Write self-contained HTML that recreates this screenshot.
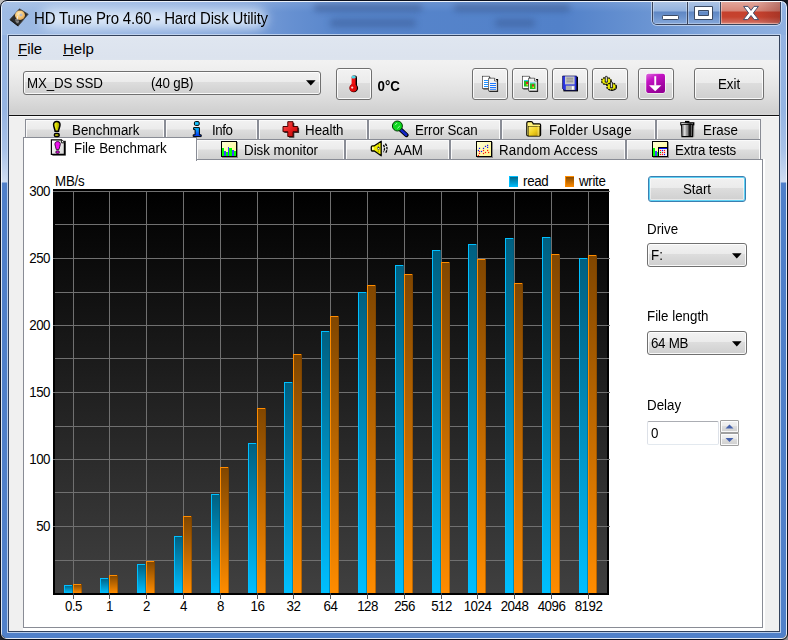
<!DOCTYPE html>
<html lang="en">
<head>
<meta charset="utf-8">
<title>HD Tune Pro 4.60 - Hard Disk Utility</title>
<style>
*{box-sizing:border-box;margin:0;padding:0}
html,body{width:788px;height:640px;overflow:hidden}
body{position:relative;font-family:"Liberation Sans",Arial,sans-serif;font-size:13.33px;color:#000;
 background:linear-gradient(180deg,#93b2e1 0px,#95b4e2 110px,#a9c2e8 150px,#d0ddf2 182px,#4f7fc9 183px,#5080c9 640px)}
.abs{position:absolute}
/* window frame */
#outline{left:0;top:0;width:788px;height:640px;border:1px solid #0a0f1c;border-radius:7px 7px 6px 6px;box-shadow:inset 0 0 0 1px rgba(255,255,255,.82)}
#corn{left:0;top:0;width:788px;height:640px}
#titlebar{left:2px;top:2px;width:784px;height:33px;border-radius:6px 6px 0 0;overflow:hidden;
 background:linear-gradient(90deg,#9ebbe4 0px,#98b6e2 80px,#8aabde 170px,#7a9fd8 240px,#6690d1 290px,#5785cb 340px,#5281c9 560px,#6b95d3 650px,#84a8dc 720px,#8fb0e0 784px)}
#titlebar .shade{left:0;top:0;width:784px;height:33px;background:linear-gradient(180deg,rgba(255,255,255,.12) 0,rgba(255,255,255,0) 10px,rgba(255,255,255,0) 33px)}
#glow{left:40px;top:7px;width:224px;height:19px;border-radius:10px;background:rgba(224,235,249,.96);filter:blur(6px)}
.blob{background:#3d5f9a;filter:blur(3px);opacity:.6;border-radius:3px}
#title{left:34px;top:10px;font-size:15px;line-height:18px;letter-spacing:-0.17px;white-space:nowrap;color:#000;transform:scaleY(1.09);transform-origin:0 14.5px}
#clientborder{left:8px;top:35px;width:772px;height:597px;border:1px solid #33425c;box-shadow:0 0 0 1px rgba(200,216,240,.85)}
#client{left:9px;top:36px;width:770px;height:595px;background:#f0f0f0;overflow:hidden}
/* caption buttons */
#capbtns{left:652px;top:2px;width:129px;height:23px;border:1px solid #39445c;border-top:none;border-radius:0 0 5px 5px;overflow:hidden;box-shadow:0 0 0 1px rgba(255,255,255,.5)}
#capbtns .b{top:0;height:22px}
#bmin{left:0;width:35px;background:linear-gradient(180deg,#adc4e5 0,#92b1dd 9px,#5f87c4 10px,#6c93cd 15px,#86a8da 22px);border-right:1px solid #39445c;box-shadow:inset 1px 0 0 rgba(255,255,255,.35),inset -1px -1px 0 rgba(255,255,255,.3)}
#bmax{left:35px;width:33px;background:linear-gradient(180deg,#adc4e5 0,#92b1dd 9px,#5f87c4 10px,#6c93cd 15px,#86a8da 22px);border-right:1px solid #39445c;box-shadow:inset 1px 0 0 rgba(255,255,255,.35),inset -1px -1px 0 rgba(255,255,255,.3)}
#bclose{left:68px;width:60px;background:linear-gradient(90deg,rgba(120,30,20,0) 0,rgba(120,30,20,0) 60%,rgba(110,30,25,.35) 100%),linear-gradient(180deg,#e2a69b 0,#d68577 9px,#c5402d 10px,#c6432f 15px,#d0685a 20px,#e09a8c 22px);box-shadow:inset 1px 0 0 rgba(255,255,255,.35),inset -1px -1px 0 rgba(255,220,210,.45)}
/* menu */
#menubar{left:9px;top:36px;width:770px;height:24px;background:linear-gradient(180deg,#e6ebf4 0,#dfe6f0 2px,#dce3ee 21px,#dde4ee 24px)}
#menubar span{position:absolute;top:4px;font-size:15px;line-height:18px}
#toolbar{left:9px;top:60px;width:770px;height:55px;background:linear-gradient(180deg,#f2f2f2 0,#ededed 14px,#e0e0e0 34px,#cfcfcf 53px,#d8d8d8 55px)}
#tbline{left:9px;top:115px;width:770px;height:1px;background:#101010}
#tbline2{left:9px;top:116px;width:770px;height:1px;background:#fafafa}
.btn{border:1px solid #707070;border-radius:3px;background:linear-gradient(180deg,#f2f2f2 0,#ebebeb 46%,#dddddd 47%,#cfcfcf 100%);box-shadow:inset 0 0 0 1px rgba(255,255,255,.85)}
.combo{border:1px solid #707070;border-radius:3px;background:linear-gradient(180deg,#f2f2f2 0,#ebebeb 46%,#dddddd 47%,#cfcfcf 100%);box-shadow:inset 0 0 0 1px rgba(255,255,255,.85)}
.combo .t{position:absolute;left:4px;top:4px;line-height:16px;white-space:pre}
.arrow{width:0;height:0;border-left:4.5px solid transparent;border-right:4.5px solid transparent;border-top:5px solid #000}
.lbl{white-space:nowrap;line-height:16px}
.lbl,.tt,.t{transform:scaleY(1.1);transform-origin:0 12.4px}
/* tabs */
.tab{height:20px;border:1px solid #898c95;border-bottom:none;background:linear-gradient(180deg,#f2f2f2 0,#ebebeb 9px,#dddddd 10px,#cfcfcf 20px);box-shadow:inset 1px 1px 0 #fafafa,inset -1px 0 0 #fafafa}
.tab .tt{position:absolute;top:3px;line-height:16px;white-space:nowrap}
#panelbg{left:23px;top:159px;width:742px;height:472px;background:#fff}
#panel{left:23px;top:159px;width:740px;height:469px;background:#fff;border:1px solid #898c95}
#seltab{left:23px;top:137px;width:174px;height:24px;background:#fff;border:1px solid #898c95;border-bottom:none}
.chart{position:absolute;left:0;top:0}
</style>
</head>
<body>
<div id="titlebar" class="abs">
  <div class="abs blob" style="left:312px;top:2px;width:108px;height:7px;opacity:.8"></div>
  <div class="abs blob" style="left:328px;top:17px;width:86px;height:8px"></div>
  <div class="abs blob" style="left:452px;top:2px;width:116px;height:7px;opacity:.8"></div>
  <div class="abs blob" style="left:493px;top:17px;width:40px;height:8px"></div>
  <div class="abs shade"></div>
  <div id="glow" class="abs"></div>
</div>
<div class="abs" style="left:0;top:0;width:8px;height:8px;background:radial-gradient(circle at 100% 100%,rgba(0,0,0,0) 7.2px,#bdbdbd 7.8px)"></div>
<div class="abs" style="left:780px;top:0;width:8px;height:8px;background:radial-gradient(circle at 0 100%,rgba(0,0,0,0) 7.2px,#15171c 7.8px)"></div>
<div class="abs" style="left:0;top:632px;width:8px;height:8px;background:radial-gradient(circle at 100% 0,rgba(0,0,0,0) 6.2px,#1d2026 6.8px)"></div>
<div class="abs" style="left:780px;top:632px;width:8px;height:8px;background:radial-gradient(circle at 0 0,rgba(0,0,0,0) 6.2px,#8c8c8c 6.8px)"></div>
<div id="outline" class="abs"></div>
<div id="title" class="abs">HD Tune Pro 4.60 - Hard Disk Utility</div>
<svg class="abs" style="left:8px;top:7px" width="22" height="22" viewBox="0 0 22 22" >
<defs><radialGradient id="pl" cx="0.4" cy="0.35" r="0.7"><stop offset="0" stop-color="#ffebb8"/><stop offset="0.6" stop-color="#f5c26e"/><stop offset="1" stop-color="#dc9c4c"/></radialGradient></defs>
<polygon points="11.5,1.8 20.2,7.2 10.2,19 1.8,12.6" fill="#2b2b2b" stroke="#4a4a4a" stroke-width="0.8" stroke-linejoin="round"/>
<polygon points="2.2,13.3 10.2,19.4 10.2,18.2 2.6,12.4" fill="#111"/>
<ellipse cx="12" cy="8.3" rx="5" ry="4.7" fill="url(#pl)"/>
<rect x="11.6" y="6.7" width="2.8" height="2.5" fill="#b9b9c4"/>
<path d="M9.6 9.2 L9.2 12.6" stroke="#f4f4f4" stroke-width="0.9"/>
<path d="M7 12.9 L10.6 12.9 M7.6 14.3 L11 14.3 M8.4 15.7 L10.6 15.7" stroke="#b8b8b8" stroke-width="0.8"/>
</svg>
<div id="capbtns" class="abs">
  <div id="bmin" class="abs b"></div>
  <div id="bmax" class="abs b"></div>
  <div id="bclose" class="abs b"></div>
  <svg class="abs" style="left:0px;top:0px" width="128" height="22" viewBox="0 0 128 22" >
<rect x="9.500" y="13.500" width="16" height="4" rx="0.800" fill="#fff" stroke="#3c4a63" stroke-width="1"/>
<path d="M41.500 4.500 h18 v13 h-18 z M45.500 8.500 v5 h10 v-5 z" fill="#fff" fill-rule="evenodd" stroke="#3c4a63" stroke-width="1" stroke-linejoin="round"/>
<path d="M90.600 4.400 L95 4.400 L98 8.400 L101 4.400 L105.400 4.400 L100.400 11 L105.600 17.600 L101.200 17.600 L98 13.500 L94.800 17.600 L90.400 17.600 L95.600 11 Z" fill="#fff" stroke="#46506e" stroke-width="1" stroke-linejoin="round"/>
</svg>
</div>
<div id="clientborder" class="abs"></div>
<div id="client" class="abs"><div class="abs" id="pc" style="left:-9px;top:-36px;width:788px;height:640px">
  <div id="menubar" class="abs"><span style="left:9px"><u>F</u>ile</span><span style="left:54px"><u>H</u>elp</span></div>
  <div id="toolbar" class="abs"></div>
  <div id="tbline" class="abs"></div><div id="tbline2" class="abs"></div>

  <div class="abs combo" style="left:23px;top:71px;width:298px;height:24px"><span class="t" style="left:3px;letter-spacing:-0.15px">MX_DS SSD</span><span class="t" style="left:127px;letter-spacing:-0.2px">(40 gB)</span><svg class="abs" style="left:281.8px;top:8.4px" width="10" height="6" viewBox="0 0 10 6" ><polygon points="0,0.300 9.600,0.300 4.800,5.600" fill="#000"/></svg></div>
  <div class="abs btn" style="left:336px;top:68px;width:36px;height:32px"><svg class="abs" style="left:11px;top:5px" width="12" height="20" viewBox="0 0 12 20" >
<rect x="4.2" y="1.6" width="4.8" height="12" rx="2" fill="#000"/>
<circle cx="5.8" cy="14" r="4.3" fill="#000"/>
<rect x="3.6" y="1.6" width="4" height="12" rx="1.6" fill="#f01010"/>
<rect x="3.6" y="1.6" width="4" height="3" rx="1.4" fill="#48d8e8"/>
<circle cx="5.2" cy="14" r="3.7" fill="#e00808"/>
<circle cx="4.2" cy="13.6" r="1.1" fill="#ffd0d0"/>
</svg></div>
  <div class="abs lbl" style="left:377.5px;top:79px;font-weight:bold">0&#176;C</div>
  <div class="abs btn" style="left:472px;top:68px;width:36px;height:32px"><svg class="abs" style="left:9px;top:6px" width="17" height="18" viewBox="0 0 17 18" >
<rect x="1.3" y="2" width="7" height="12.4" fill="#000"/>
<rect x="0.5" y="1.2" width="7" height="12.4" fill="#fff" stroke="#222" stroke-width="0.6"/>
<path d="M2 5.5h4M2 7.5h4M2 9.5h4M2 11.5h4" stroke="#1e90ff" stroke-width="1"/>
<rect x="7.3" y="4" width="8.8" height="12.8" fill="#000"/>
<path d="M6.5 3.2 h6 l2.8 2.8 v10 h-8.8 z" fill="#f4f4f4" stroke="#222" stroke-width="0.6"/>
<path d="M12.5 3.2 v2.8 h2.8" fill="#fff" stroke="#222" stroke-width="0.6"/>
<path d="M8 8.5h6M8 10.5h6M8 12.5h6M8 14.3h6" stroke="#1e78ff" stroke-width="1"/>
</svg></div>
  <div class="abs btn" style="left:512px;top:68px;width:36px;height:32px"><svg class="abs" style="left:9px;top:6px" width="17" height="18" viewBox="0 0 17 18" >
<rect x="1.3" y="2" width="7" height="12.4" fill="#000"/>
<rect x="0.5" y="1.2" width="7" height="12.4" fill="#fff" stroke="#222" stroke-width="0.6"/>
<rect x="2" y="5" width="5.5" height="1" fill="#30c8f0"/>
<rect x="2" y="6" width="5.5" height="5.5" fill="#20c020"/>
<rect x="4" y="7" width="2" height="2" fill="#e02020"/><rect x="4.5" y="9" width="1.5" height="1.5" fill="#f0e020"/>
<rect x="7.3" y="4" width="8.8" height="12.8" fill="#000"/>
<path d="M6.500 3.2 h6 l2.800 2.8 v10 h-8.800 z" fill="#eee" stroke="#222" stroke-width="0.6"/>
<path d="M12.500 3.2 v2.800 h2.800" fill="#fff" stroke="#222" stroke-width="0.6"/>
<rect x="8" y="7.500" width="5.500" height="1" fill="#30c8f0"/>
<rect x="8" y="8.500" width="5.500" height="5.500" fill="#20c020"/>
<rect x="10" y="9.500" width="2" height="2" fill="#e02020"/><rect x="10.500" y="11.500" width="1.500" height="1.500" fill="#f0e020"/>
</svg></div>
  <div class="abs btn" style="left:552px;top:68px;width:36px;height:32px"><svg class="abs" style="left:9px;top:6px" width="17" height="17" viewBox="0 0 17 17" >
<rect x="1.400" y="1.800" width="14.600" height="14.600" fill="#000"/>
<path d="M0.600 1 h14 v14.200 h-12.400 l-1.600 -1.600 z" fill="#2a34e4" stroke="#10104a" stroke-width="0.7"/>
<rect x="3" y="1.400" width="9.600" height="8" fill="#c9c9c9"/>
<path d="M4.400 3.200h6.800M4.400 5h6.800M4.400 6.800h6.800" stroke="#858585" stroke-width="0.9"/>
<rect x="3.800" y="10.600" width="9" height="4.400" fill="#b0b0b0"/>
<rect x="9.800" y="11.200" width="2" height="3.400" fill="#fff"/>
</svg></div>
  <div class="abs btn" style="left:592px;top:68px;width:36px;height:32px"><svg class="abs" style="left:7px;top:5px" width="20" height="20" viewBox="0 0 20 20" ><g transform="translate(6.3,6.9)"><ellipse cx="0.500" cy="0.600" rx="5" ry="3.700" fill="#111"/>
<ellipse rx="4.700" ry="3.400" fill="#dcdc00" stroke="#111" stroke-width="1.500" stroke-dasharray="1.500 1.100"/>
<ellipse rx="3.700" ry="2.500" fill="#f2f200"/>
<ellipse cy="0.900" rx="1.700" ry="0.900" fill="#555"/>
<polygon points="-1.100,1 -1.100,-3.800 0,-5 1.100,-3.800 1.100,1" fill="#a8a8a8" stroke="#111" stroke-width="0.800"/>
<rect x="-0.300" y="-3.600" width="0.600" height="4.200" fill="#f4f4f4"/></g><g transform="translate(11.5,12.6)"><ellipse cx="0.500" cy="0.600" rx="5" ry="3.700" fill="#111"/>
<ellipse rx="4.700" ry="3.400" fill="#dcdc00" stroke="#111" stroke-width="1.500" stroke-dasharray="1.500 1.100"/>
<ellipse rx="3.700" ry="2.500" fill="#f2f200"/>
<ellipse cy="0.900" rx="1.700" ry="0.900" fill="#555"/>
<polygon points="-1.100,1 -1.100,-3.800 0,-5 1.100,-3.800 1.100,1" fill="#a8a8a8" stroke="#111" stroke-width="0.800"/>
<rect x="-0.300" y="-3.600" width="0.600" height="4.200" fill="#f4f4f4"/></g></svg></div>
  <div class="abs btn" style="left:638px;top:68px;width:36px;height:32px"><svg class="abs" style="left:6px;top:3px" width="22" height="23" viewBox="0 0 22 23" >
<defs><linearGradient id="pg" x1="0" y1="0" x2="0.500" y2="1"><stop offset="0" stop-color="#dc6adc"/><stop offset="0.350" stop-color="#c414c4"/><stop offset="1" stop-color="#960096"/></linearGradient></defs>
<rect x="0.600" y="1.200" width="20" height="20.400" rx="2.400" fill="#fff"/>
<rect x="1.200" y="1.800" width="18.800" height="19.200" rx="2" fill="url(#pg)"/>
<rect x="9.300" y="4.200" width="1.900" height="9.400" fill="#fff"/>
<polygon points="4,13.200 16.400,13.200 10.200,19.200" fill="#fff"/>
</svg></div>
  <div class="abs btn" style="left:694px;top:68px;width:70px;height:32px"><div class="abs lbl" style="left:0;width:68px;top:8.3px;text-align:center">Exit</div></div>

  <!-- tabs row 1 -->
  <div class="abs tab" style="left:25px;top:119px;width:140px"><span class="tt" style="left:46px">Benchmark</span></div>
  <div class="abs tab" style="left:165px;top:119px;width:93px"><span class="tt" style="left:46px;letter-spacing:-0.45px">Info</span></div>
  <div class="abs tab" style="left:258px;top:119px;width:110px"><span class="tt" style="left:46px">Health</span></div>
  <div class="abs tab" style="left:368px;top:119px;width:133px"><span class="tt" style="left:46px;letter-spacing:-0.12px">Error Scan</span></div>
  <div class="abs tab" style="left:501px;top:119px;width:155px"><span class="tt" style="left:47px;letter-spacing:0.23px">Folder Usage</span></div>
  <div class="abs tab" style="left:656px;top:119px;width:105px"><span class="tt" style="left:46px">Erase</span></div>
  <!-- tabs row 2 -->
  <div class="abs tab" style="left:196px;top:139px;width:149px"><span class="tt" style="left:47px">Disk monitor</span></div>
  <div class="abs tab" style="left:345px;top:139px;width:105px"><span class="tt" style="left:48px">AAM</span></div>
  <div class="abs tab" style="left:450px;top:139px;width:176px"><span class="tt" style="left:48px;letter-spacing:0.2px">Random Access</span></div>
  <div class="abs tab" style="left:626px;top:139px;width:135px"><span class="tt" style="left:48px;letter-spacing:-0.19px">Extra tests</span></div>
  <div id="panelbg" class="abs"></div>
  <div id="panel" class="abs"></div>
  <div id="seltab" class="abs"><span class="abs lbl" style="left:50px;top:3px">File Benchmark</span></div>
</div></div>
<svg class="chart" width="788" height="640" viewBox="0 0 788 640">
<defs>
<linearGradient id="bg" x1="0" y1="0" x2="0" y2="1"><stop offset="0" stop-color="#000"/><stop offset="1" stop-color="#404040"/></linearGradient>
<linearGradient id="rd" x1="0" y1="0" x2="0" y2="1"><stop offset="0" stop-color="#005f80"/><stop offset="1" stop-color="#00bfff"/></linearGradient>
<linearGradient id="wr" x1="0" y1="0" x2="0" y2="1"><stop offset="0" stop-color="#804600"/><stop offset="1" stop-color="#ff8c00"/></linearGradient>
</defs>
<rect x="53" y="189" width="556" height="406" fill="#000"/>
<rect x="55" y="191" width="552" height="402" fill="url(#bg)"/>
<rect x="55" y="560" width="554" height="1" fill="#707070"/>
<rect x="53" y="526" width="557" height="1" fill="#707070"/>
<rect x="55" y="492" width="554" height="1" fill="#707070"/>
<rect x="53" y="459" width="557" height="1" fill="#707070"/>
<rect x="55" y="426" width="554" height="1" fill="#707070"/>
<rect x="53" y="392" width="557" height="1" fill="#707070"/>
<rect x="55" y="358" width="554" height="1" fill="#707070"/>
<rect x="53" y="325" width="557" height="1" fill="#707070"/>
<rect x="55" y="292" width="554" height="1" fill="#707070"/>
<rect x="53" y="258" width="557" height="1" fill="#707070"/>
<rect x="55" y="224" width="554" height="1" fill="#707070"/>
<rect x="53" y="191" width="557" height="1" fill="#707070"/>
<rect x="73" y="191" width="1" height="402" fill="#707070"/>
<rect x="109" y="191" width="1" height="402" fill="#707070"/>
<rect x="146" y="191" width="1" height="402" fill="#707070"/>
<rect x="183" y="191" width="1" height="402" fill="#707070"/>
<rect x="220" y="191" width="1" height="402" fill="#707070"/>
<rect x="257" y="191" width="1" height="402" fill="#707070"/>
<rect x="293" y="191" width="1" height="402" fill="#707070"/>
<rect x="330" y="191" width="1" height="402" fill="#707070"/>
<rect x="367" y="191" width="1" height="402" fill="#707070"/>
<rect x="404" y="191" width="1" height="402" fill="#707070"/>
<rect x="441" y="191" width="1" height="402" fill="#707070"/>
<rect x="477" y="191" width="1" height="402" fill="#707070"/>
<rect x="514" y="191" width="1" height="402" fill="#707070"/>
<rect x="551" y="191" width="1" height="402" fill="#707070"/>
<rect x="588" y="191" width="1" height="402" fill="#707070"/>
<rect x="64" y="585" width="9" height="8" fill="url(#rd)"/>
<rect x="64" y="585" width="1" height="8" fill="#00bfff"/>
<rect x="64" y="585" width="8" height="1" fill="#00bfff"/>
<rect x="72" y="585" width="1" height="8" fill="#00506c" opacity="0.45"/>
<rect x="73" y="584" width="9" height="9" fill="url(#wr)"/>
<rect x="73" y="584" width="1" height="9" fill="#ff8c00"/>
<rect x="73" y="584" width="8" height="1" fill="#ff8c00"/>
<rect x="81" y="584" width="1" height="9" fill="#6e3c00" opacity="0.45"/>
<rect x="100" y="578" width="9" height="15" fill="url(#rd)"/>
<rect x="100" y="578" width="1" height="15" fill="#00bfff"/>
<rect x="100" y="578" width="8" height="1" fill="#00bfff"/>
<rect x="108" y="578" width="1" height="15" fill="#00506c" opacity="0.45"/>
<rect x="109" y="575" width="9" height="18" fill="url(#wr)"/>
<rect x="109" y="575" width="1" height="18" fill="#ff8c00"/>
<rect x="109" y="575" width="8" height="1" fill="#ff8c00"/>
<rect x="117" y="575" width="1" height="18" fill="#6e3c00" opacity="0.45"/>
<rect x="137" y="564" width="9" height="29" fill="url(#rd)"/>
<rect x="137" y="564" width="1" height="29" fill="#00bfff"/>
<rect x="137" y="564" width="8" height="1" fill="#00bfff"/>
<rect x="145" y="564" width="1" height="29" fill="#00506c" opacity="0.45"/>
<rect x="146" y="561" width="9" height="32" fill="url(#wr)"/>
<rect x="146" y="561" width="1" height="32" fill="#ff8c00"/>
<rect x="146" y="561" width="8" height="1" fill="#ff8c00"/>
<rect x="154" y="561" width="1" height="32" fill="#6e3c00" opacity="0.45"/>
<rect x="174" y="536" width="9" height="57" fill="url(#rd)"/>
<rect x="174" y="536" width="1" height="57" fill="#00bfff"/>
<rect x="174" y="536" width="8" height="1" fill="#00bfff"/>
<rect x="182" y="536" width="1" height="57" fill="#00506c" opacity="0.45"/>
<rect x="183" y="516" width="9" height="77" fill="url(#wr)"/>
<rect x="183" y="516" width="1" height="77" fill="#ff8c00"/>
<rect x="183" y="516" width="8" height="1" fill="#ff8c00"/>
<rect x="191" y="516" width="1" height="77" fill="#6e3c00" opacity="0.45"/>
<rect x="211" y="494" width="9" height="99" fill="url(#rd)"/>
<rect x="211" y="494" width="1" height="99" fill="#00bfff"/>
<rect x="211" y="494" width="8" height="1" fill="#00bfff"/>
<rect x="219" y="494" width="1" height="99" fill="#00506c" opacity="0.45"/>
<rect x="220" y="467" width="9" height="126" fill="url(#wr)"/>
<rect x="220" y="467" width="1" height="126" fill="#ff8c00"/>
<rect x="220" y="467" width="8" height="1" fill="#ff8c00"/>
<rect x="228" y="467" width="1" height="126" fill="#6e3c00" opacity="0.45"/>
<rect x="248" y="443" width="9" height="150" fill="url(#rd)"/>
<rect x="248" y="443" width="1" height="150" fill="#00bfff"/>
<rect x="248" y="443" width="8" height="1" fill="#00bfff"/>
<rect x="256" y="443" width="1" height="150" fill="#00506c" opacity="0.45"/>
<rect x="257" y="408" width="9" height="185" fill="url(#wr)"/>
<rect x="257" y="408" width="1" height="185" fill="#ff8c00"/>
<rect x="257" y="408" width="8" height="1" fill="#ff8c00"/>
<rect x="265" y="408" width="1" height="185" fill="#6e3c00" opacity="0.45"/>
<rect x="284" y="382" width="9" height="211" fill="url(#rd)"/>
<rect x="284" y="382" width="1" height="211" fill="#00bfff"/>
<rect x="284" y="382" width="8" height="1" fill="#00bfff"/>
<rect x="292" y="382" width="1" height="211" fill="#00506c" opacity="0.45"/>
<rect x="293" y="354" width="9" height="239" fill="url(#wr)"/>
<rect x="293" y="354" width="1" height="239" fill="#ff8c00"/>
<rect x="293" y="354" width="8" height="1" fill="#ff8c00"/>
<rect x="301" y="354" width="1" height="239" fill="#6e3c00" opacity="0.45"/>
<rect x="321" y="331" width="9" height="262" fill="url(#rd)"/>
<rect x="321" y="331" width="1" height="262" fill="#00bfff"/>
<rect x="321" y="331" width="8" height="1" fill="#00bfff"/>
<rect x="329" y="331" width="1" height="262" fill="#00506c" opacity="0.45"/>
<rect x="330" y="316" width="9" height="277" fill="url(#wr)"/>
<rect x="330" y="316" width="1" height="277" fill="#ff8c00"/>
<rect x="330" y="316" width="8" height="1" fill="#ff8c00"/>
<rect x="338" y="316" width="1" height="277" fill="#6e3c00" opacity="0.45"/>
<rect x="358" y="292" width="9" height="301" fill="url(#rd)"/>
<rect x="358" y="292" width="1" height="301" fill="#00bfff"/>
<rect x="358" y="292" width="8" height="1" fill="#00bfff"/>
<rect x="366" y="292" width="1" height="301" fill="#00506c" opacity="0.45"/>
<rect x="367" y="285" width="9" height="308" fill="url(#wr)"/>
<rect x="367" y="285" width="1" height="308" fill="#ff8c00"/>
<rect x="367" y="285" width="8" height="1" fill="#ff8c00"/>
<rect x="375" y="285" width="1" height="308" fill="#6e3c00" opacity="0.45"/>
<rect x="395" y="265" width="9" height="328" fill="url(#rd)"/>
<rect x="395" y="265" width="1" height="328" fill="#00bfff"/>
<rect x="395" y="265" width="8" height="1" fill="#00bfff"/>
<rect x="403" y="265" width="1" height="328" fill="#00506c" opacity="0.45"/>
<rect x="404" y="274" width="9" height="319" fill="url(#wr)"/>
<rect x="404" y="274" width="1" height="319" fill="#ff8c00"/>
<rect x="404" y="274" width="8" height="1" fill="#ff8c00"/>
<rect x="412" y="274" width="1" height="319" fill="#6e3c00" opacity="0.45"/>
<rect x="432" y="250" width="9" height="343" fill="url(#rd)"/>
<rect x="432" y="250" width="1" height="343" fill="#00bfff"/>
<rect x="432" y="250" width="8" height="1" fill="#00bfff"/>
<rect x="440" y="250" width="1" height="343" fill="#00506c" opacity="0.45"/>
<rect x="441" y="262" width="9" height="331" fill="url(#wr)"/>
<rect x="441" y="262" width="1" height="331" fill="#ff8c00"/>
<rect x="441" y="262" width="8" height="1" fill="#ff8c00"/>
<rect x="449" y="262" width="1" height="331" fill="#6e3c00" opacity="0.45"/>
<rect x="468" y="244" width="9" height="349" fill="url(#rd)"/>
<rect x="468" y="244" width="1" height="349" fill="#00bfff"/>
<rect x="468" y="244" width="8" height="1" fill="#00bfff"/>
<rect x="476" y="244" width="1" height="349" fill="#00506c" opacity="0.45"/>
<rect x="477" y="259" width="9" height="334" fill="url(#wr)"/>
<rect x="477" y="259" width="1" height="334" fill="#ff8c00"/>
<rect x="477" y="259" width="8" height="1" fill="#ff8c00"/>
<rect x="485" y="259" width="1" height="334" fill="#6e3c00" opacity="0.45"/>
<rect x="505" y="238" width="9" height="355" fill="url(#rd)"/>
<rect x="505" y="238" width="1" height="355" fill="#00bfff"/>
<rect x="505" y="238" width="8" height="1" fill="#00bfff"/>
<rect x="513" y="238" width="1" height="355" fill="#00506c" opacity="0.45"/>
<rect x="514" y="283" width="9" height="310" fill="url(#wr)"/>
<rect x="514" y="283" width="1" height="310" fill="#ff8c00"/>
<rect x="514" y="283" width="8" height="1" fill="#ff8c00"/>
<rect x="522" y="283" width="1" height="310" fill="#6e3c00" opacity="0.45"/>
<rect x="542" y="237" width="9" height="356" fill="url(#rd)"/>
<rect x="542" y="237" width="1" height="356" fill="#00bfff"/>
<rect x="542" y="237" width="8" height="1" fill="#00bfff"/>
<rect x="550" y="237" width="1" height="356" fill="#00506c" opacity="0.45"/>
<rect x="551" y="254" width="9" height="339" fill="url(#wr)"/>
<rect x="551" y="254" width="1" height="339" fill="#ff8c00"/>
<rect x="551" y="254" width="8" height="1" fill="#ff8c00"/>
<rect x="559" y="254" width="1" height="339" fill="#6e3c00" opacity="0.45"/>
<rect x="579" y="258" width="9" height="335" fill="url(#rd)"/>
<rect x="579" y="258" width="1" height="335" fill="#00bfff"/>
<rect x="579" y="258" width="8" height="1" fill="#00bfff"/>
<rect x="587" y="258" width="1" height="335" fill="#00506c" opacity="0.45"/>
<rect x="588" y="255" width="9" height="338" fill="url(#wr)"/>
<rect x="588" y="255" width="1" height="338" fill="#ff8c00"/>
<rect x="588" y="255" width="8" height="1" fill="#ff8c00"/>
<rect x="596" y="255" width="1" height="338" fill="#6e3c00" opacity="0.45"/>
<rect x="53" y="593" width="556" height="2" fill="#000"/>
<rect x="73" y="593" width="1" height="2" fill="#3a3f48"/><rect x="73" y="595" width="1" height="4" fill="#5a5a5a"/>
<rect x="109" y="593" width="1" height="2" fill="#3a3f48"/><rect x="109" y="595" width="1" height="4" fill="#5a5a5a"/>
<rect x="146" y="593" width="1" height="2" fill="#3a3f48"/><rect x="146" y="595" width="1" height="4" fill="#5a5a5a"/>
<rect x="183" y="593" width="1" height="2" fill="#3a3f48"/><rect x="183" y="595" width="1" height="4" fill="#5a5a5a"/>
<rect x="220" y="593" width="1" height="2" fill="#3a3f48"/><rect x="220" y="595" width="1" height="4" fill="#5a5a5a"/>
<rect x="257" y="593" width="1" height="2" fill="#3a3f48"/><rect x="257" y="595" width="1" height="4" fill="#5a5a5a"/>
<rect x="293" y="593" width="1" height="2" fill="#3a3f48"/><rect x="293" y="595" width="1" height="4" fill="#5a5a5a"/>
<rect x="330" y="593" width="1" height="2" fill="#3a3f48"/><rect x="330" y="595" width="1" height="4" fill="#5a5a5a"/>
<rect x="367" y="593" width="1" height="2" fill="#3a3f48"/><rect x="367" y="595" width="1" height="4" fill="#5a5a5a"/>
<rect x="404" y="593" width="1" height="2" fill="#3a3f48"/><rect x="404" y="595" width="1" height="4" fill="#5a5a5a"/>
<rect x="441" y="593" width="1" height="2" fill="#3a3f48"/><rect x="441" y="595" width="1" height="4" fill="#5a5a5a"/>
<rect x="477" y="593" width="1" height="2" fill="#3a3f48"/><rect x="477" y="595" width="1" height="4" fill="#5a5a5a"/>
<rect x="514" y="593" width="1" height="2" fill="#3a3f48"/><rect x="514" y="595" width="1" height="4" fill="#5a5a5a"/>
<rect x="551" y="593" width="1" height="2" fill="#3a3f48"/><rect x="551" y="595" width="1" height="4" fill="#5a5a5a"/>
<rect x="588" y="593" width="1" height="2" fill="#3a3f48"/><rect x="588" y="595" width="1" height="4" fill="#5a5a5a"/>
<g font-family="Liberation Sans, Arial, sans-serif" font-size="13.33" fill="#000" letter-spacing="-0.5">
<text transform="translate(50,530.8) scale(1,1.1)" text-anchor="end">50</text>
<text transform="translate(50,463.8) scale(1,1.1)" text-anchor="end">100</text>
<text transform="translate(50,396.8) scale(1,1.1)" text-anchor="end">150</text>
<text transform="translate(50,329.8) scale(1,1.1)" text-anchor="end">200</text>
<text transform="translate(50,262.8) scale(1,1.1)" text-anchor="end">250</text>
<text transform="translate(50,195.8) scale(1,1.1)" text-anchor="end">300</text>
<text transform="translate(73.5,611.3) scale(1,1.1)" text-anchor="middle">0.5</text>
<text transform="translate(109.5,611.3) scale(1,1.1)" text-anchor="middle">1</text>
<text transform="translate(146.5,611.3) scale(1,1.1)" text-anchor="middle">2</text>
<text transform="translate(183.5,611.3) scale(1,1.1)" text-anchor="middle">4</text>
<text transform="translate(220.5,611.3) scale(1,1.1)" text-anchor="middle">8</text>
<text transform="translate(257.5,611.3) scale(1,1.1)" text-anchor="middle">16</text>
<text transform="translate(293.5,611.3) scale(1,1.1)" text-anchor="middle">32</text>
<text transform="translate(330.5,611.3) scale(1,1.1)" text-anchor="middle">64</text>
<text transform="translate(367.5,611.3) scale(1,1.1)" text-anchor="middle">128</text>
<text transform="translate(404.5,611.3) scale(1,1.1)" text-anchor="middle">256</text>
<text transform="translate(441.5,611.3) scale(1,1.1)" text-anchor="middle">512</text>
<text transform="translate(477.5,611.3) scale(1,1.1)" text-anchor="middle">1024</text>
<text transform="translate(514.5,611.3) scale(1,1.1)" text-anchor="middle">2048</text>
<text transform="translate(551.5,611.3) scale(1,1.1)" text-anchor="middle">4096</text>
<text transform="translate(588.5,611.3) scale(1,1.1)" text-anchor="middle">8192</text>
<text transform="translate(55,185.6) scale(1,1.1)" letter-spacing="-0.2">MB/s</text>
<rect x="509" y="176" width="9" height="11" fill="url(#rd)"/><rect x="509" y="176" width="9" height="1" fill="#00bfff"/><rect x="509" y="176" width="1" height="11" fill="#00bfff"/>
<text transform="translate(523,186) scale(1,1.1)" letter-spacing="-0.3">read</text>
<rect x="565" y="176" width="9" height="11" fill="url(#wr)"/><rect x="565" y="176" width="9" height="1" fill="#ff8c00"/><rect x="565" y="176" width="1" height="11" fill="#ff8c00"/>
<text transform="translate(579,186) scale(1,1.1)" letter-spacing="-0.3">write</text>
</g></svg>
<!-- right controls (page coords) -->
<div class="abs btn" id="start" style="left:648px;top:176px;width:98px;height:26px;border-color:#3c7fb1;box-shadow:inset 0 0 0 1px #5fd3f5, inset 0 0 0 2px rgba(255,255,255,.5)"><div class="abs lbl" style="left:0;width:96px;top:4.5px;text-align:center">Start</div></div>
<div class="abs lbl" style="left:647px;top:222px">Drive</div>
<div class="abs combo" style="left:647px;top:243px;width:100px;height:24px"><span class="t" style="left:3px;top:4px">F:</span><svg class="abs" style="left:83.7px;top:8.7px" width="10" height="6" viewBox="0 0 10 6" ><polygon points="0,0.300 9.600,0.300 4.800,5.600" fill="#000"/></svg></div>
<div class="abs lbl" style="left:647px;top:309px">File length</div>
<div class="abs combo" style="left:647px;top:331px;width:100px;height:24px"><span class="t" style="left:3px;top:4px;letter-spacing:-0.3px">64 MB</span><svg class="abs" style="left:83.7px;top:8.7px" width="10" height="6" viewBox="0 0 10 6" ><polygon points="0,0.300 9.600,0.300 4.800,5.600" fill="#000"/></svg></div>
<div class="abs lbl" style="left:647px;top:398.3px">Delay</div>
<div class="abs" style="left:647px;top:421px;width:72px;height:24px;background:#fff;border:1px solid #dde1e8;border-top-color:#abadb3;border-bottom-color:#e3e9ef;border-radius:2px"><span class="abs lbl" style="left:3px;top:3.5px">0</span></div>
<div class="abs btn" style="left:720px;top:420px;width:19px;height:13px;border-radius:1px 1px 0 0;border-color:#a0a0a0"></div>
<div class="abs btn" style="left:720px;top:433px;width:19px;height:13px;border-radius:0 0 1px 1px;border-color:#a0a0a0"></div>
<svg class="abs" style="left:720px;top:420px" width="19" height="26" viewBox="0 0 19 26" >
<polygon points="5.500,8.600 13.500,8.600 9.500,4.600" fill="#4662ac"/>
<polygon points="5.500,18 13.500,18 9.500,22" fill="#4662ac"/>
</svg>
<svg class="abs" style="left:52px;top:120px" width="10" height="18" viewBox="0 0 10 18" >
<defs><linearGradient id="yl" x1="0" y1="0" x2="1" y2="0"><stop offset="0" stop-color="#f8f840"/><stop offset="0.450" stop-color="#dcdc00"/><stop offset="1" stop-color="#8c8c00"/></linearGradient></defs>
<path d="M4.800 1.400 C7.200 1.400 8 3 8 4.800 C8 7 6.700 9 6.500 11.200 L3.100 11.200 C2.900 9 1.600 7 1.600 4.800 C1.600 3 2.400 1.400 4.800 1.400 Z" fill="url(#yl)" stroke="#000" stroke-width="1.500"/>
<rect x="2.400" y="13.600" width="4.800" height="3" rx="1.400" fill="url(#yl)" stroke="#000" stroke-width="1.500"/>
</svg>
<svg class="abs" style="left:50px;top:138px" width="17" height="18" viewBox="0 0 17 18" >
<defs><linearGradient id="pp" x1="0" y1="0" x2="1" y2="1"><stop offset="0" stop-color="#ffffff"/><stop offset="1" stop-color="#d4d4d4"/></linearGradient></defs>
<rect x="2.400" y="2.800" width="13.400" height="14.800" fill="#1a1a1a"/>
<path d="M1.400 1.800 h10 l3 3 v11.600 h-13 z" fill="url(#pp)" stroke="#000" stroke-width="1.200"/>
<path d="M11.400 1.800 v3 h3" fill="#fff" stroke="#000" stroke-width="0.900"/>
<path d="M7.600 3.600 C9.800 3.600 10.300 5 10.300 6.300 C10.300 8 9.100 9.600 8.900 11.600 L6.300 11.600 C6.100 9.600 4.900 8 4.900 6.300 C4.900 5 5.400 3.600 7.600 3.600 Z" fill="#ee10ee" stroke="#2a002a" stroke-width="0.900"/>
<rect x="5.900" y="12.900" width="3.400" height="2.400" rx="1" fill="#ee10ee" stroke="#2a002a" stroke-width="0.900"/>
</svg>
<svg class="abs" style="left:192px;top:120px" width="11" height="18" viewBox="0 0 11 18" >
<defs><linearGradient id="bl" x1="0" y1="0" x2="0" y2="1"><stop offset="0" stop-color="#00c8ff"/><stop offset="0.450" stop-color="#0a7cff"/><stop offset="1" stop-color="#0030f0"/></linearGradient></defs>
<rect x="2.400" y="1.600" width="4.800" height="3.800" rx="1.200" fill="#18c4ff" stroke="#000" stroke-width="1"/>
<path d="M1.600 7.600 h5.800 v7.200 h1.800 v1.800 h-8 v-1.800 h1.900 v-5.200 h-1.500 z" fill="url(#bl)" stroke="#000" stroke-width="1" stroke-linejoin="round"/>
</svg>
<svg class="abs" style="left:281px;top:120px" width="19" height="18" viewBox="0 0 19 18" >
<defs><linearGradient id="rdg" x1="0" y1="0" x2="1" y2="1"><stop offset="0" stop-color="#ff5050"/><stop offset="0.600" stop-color="#e01818"/><stop offset="1" stop-color="#b00808"/></linearGradient></defs>
<path d="M7.300 2.200 h5.200 v4.800 h4.800 v5.200 h-4.800 v4.800 h-5.200 v-4.800 h-4.800 v-5.200 h4.800 z" transform="translate(0.800,0.800)" fill="#333"/>
<path d="M6.800 1.700 h5.200 v4.800 h4.800 v5.200 h-4.800 v4.800 h-5.200 v-4.800 h-4.800 v-5.200 h4.800 z" fill="url(#rdg)" stroke="#4a0000" stroke-width="1" stroke-linejoin="round"/>
</svg>
<svg class="abs" style="left:390px;top:119px" width="20" height="19" viewBox="0 0 20 19" >
<path d="M10.600 10.600 L16.400 16" stroke="#000" stroke-width="4.400" stroke-linecap="round"/>
<path d="M10.600 10.600 L16.200 15.800" stroke="#1428c8" stroke-width="2.600" stroke-linecap="round"/>
<circle cx="7.400" cy="7" r="5" fill="#10d820" stroke="#003800" stroke-width="1"/>
<path d="M5 6.200 L7.200 4 M7.400 9.400 L9.800 7" stroke="#b8ffb8" stroke-width="0.900"/>
</svg>
<svg class="abs" style="left:525px;top:120px" width="18" height="18" viewBox="0 0 18 18" >
<defs><linearGradient id="fg" x1="0" y1="0" x2="1" y2="1"><stop offset="0" stop-color="#fff070"/><stop offset="0.500" stop-color="#f0d020"/><stop offset="1" stop-color="#c09808"/></linearGradient></defs>
<path d="M1.800 3 q0 -1.400 1.400 -1.400 h3 q1.200 0 1.600 1.200 l0.400 1 h6.200 q1.200 0 1.200 1.200 v9.800 q0 1.200 -1.200 1.200 h-11.400 q-1.200 0 -1.200 -1.200 z" fill="#fff27a" stroke="#000" stroke-width="1.200"/>
<rect x="3.600" y="6.400" width="11.200" height="9.600" fill="url(#fg)" stroke="#3a3000" stroke-width="0.600"/>
<path d="M13.200 6.400 v9.600" stroke="#fff6a0" stroke-width="0.700"/>
</svg>
<svg class="abs" style="left:679px;top:120px" width="17" height="18" viewBox="0 0 17 18" >
<defs><linearGradient id="tg" x1="0" y1="0" x2="1" y2="0"><stop offset="0" stop-color="#8a8a8a"/><stop offset="0.180" stop-color="#b8b8b8"/><stop offset="0.280" stop-color="#f4f4f4"/><stop offset="0.360" stop-color="#a8a8a8"/><stop offset="0.550" stop-color="#8a8a8a"/><stop offset="0.680" stop-color="#1c1c1c"/><stop offset="0.840" stop-color="#161616"/><stop offset="0.920" stop-color="#6a6a6a"/><stop offset="1" stop-color="#303030"/></linearGradient>
<linearGradient id="tl" x1="0" y1="0" x2="1" y2="0"><stop offset="0" stop-color="#e0e0e0"/><stop offset="0.450" stop-color="#8a8a8a"/><stop offset="0.800" stop-color="#2a2a2a"/><stop offset="1" stop-color="#777"/></linearGradient></defs>
<rect x="6" y="0.900" width="4.400" height="2" fill="#000"/>
<rect x="1.200" y="2.200" width="14.200" height="3.200" fill="#000"/>
<rect x="2.300" y="2.900" width="11.600" height="1.300" fill="url(#tl)"/>
<path d="M2 4.900 h12.600 l-0.400 12.400 h-11.800 z" fill="#000"/>
<path d="M3.100 5.100 h10.300 l-0.300 11 h-9.700 z" fill="url(#tg)"/>
<rect x="14.400" y="5.400" width="0.900" height="11.400" fill="#555" opacity="0.500"/>
</svg>
<svg class="abs" style="left:221px;top:141px" width="17" height="17" viewBox="0 0 17 17" >
<defs><linearGradient id="ly" x1="0" y1="0" x2="1" y2="1"><stop offset="0" stop-color="#ffffd8"/><stop offset="1" stop-color="#fff68a"/></linearGradient></defs>
<rect x="1" y="1" width="16" height="16" fill="#555" opacity="0.600"/>
<rect x="0.500" y="0.500" width="15" height="15" fill="url(#ly)" stroke="#000" stroke-width="1"/>
<rect x="1" y="7" width="2" height="8" fill="#00ff00"/><rect x="3" y="10" width="2" height="5" fill="#4040ff"/>
<rect x="5" y="11" width="2" height="4" fill="#00ff00"/><rect x="7" y="6" width="1" height="9" fill="#4040ff"/>
<rect x="8" y="7" width="3" height="8" fill="#00ff00"/><rect x="11" y="9" width="2" height="6" fill="#4040ff"/>
<rect x="13" y="10" width="2" height="5" fill="#00ff00"/>
</svg>
<svg class="abs" style="left:476px;top:141px" width="17" height="17" viewBox="0 0 17 17" >
<rect x="1" y="1" width="16" height="16" fill="#555" opacity="0.600"/>
<rect x="0.500" y="0.500" width="15" height="15" fill="url(#ly)" stroke="#000" stroke-width="1"/>
<rect x="2.9" y="6.8" width="1.200" height="1.200" fill="#1010ff"/><rect x="1.8" y="8.9" width="1.200" height="1.200" fill="#1010ff"/><rect x="4.9" y="9.9" width="1.200" height="1.200" fill="#1010ff"/><rect x="6.9" y="6.8" width="1.200" height="1.200" fill="#1010ff"/><rect x="8.9" y="4.8" width="1.200" height="1.200" fill="#1010ff"/><rect x="11.0" y="3.8" width="1.200" height="1.200" fill="#1010ff"/><rect x="11.0" y="5.8" width="1.200" height="1.200" fill="#1010ff"/><rect x="2.9" y="9.9" width="1.200" height="1.200" fill="#ff1010"/><rect x="2.9" y="11.9" width="1.200" height="1.200" fill="#ff1010"/><rect x="1.8" y="13.9" width="1.200" height="1.200" fill="#ff1010"/><rect x="6.9" y="8.9" width="1.200" height="1.200" fill="#ff1010"/><rect x="6.9" y="11.9" width="1.200" height="1.200" fill="#ff1010"/><rect x="8.9" y="10.9" width="1.200" height="1.200" fill="#ff1010"/><rect x="11.0" y="8.9" width="1.200" height="1.200" fill="#ff1010"/><rect x="12.0" y="10.9" width="1.200" height="1.200" fill="#ff1010"/>
</svg>
<svg class="abs" style="left:652px;top:141px" width="17" height="17" viewBox="0 0 17 17" >
<rect x="1" y="1" width="16" height="16" fill="#555" opacity="0.600"/>
<rect x="0.500" y="0.500" width="15" height="15" fill="url(#ly)" stroke="#000" stroke-width="1"/>
<rect x="1" y="7" width="2" height="8" fill="#00ff00"/><rect x="3" y="10" width="2" height="5" fill="#4040ff"/><rect x="5" y="11" width="1" height="4" fill="#00ff00"/>
<rect x="6.500" y="6.500" width="9" height="9" fill="#f4f4f4" stroke="#000" stroke-width="1"/>
<rect x="7" y="7" width="8" height="1" fill="#1010ff"/>
<rect x="7.9" y="8.9" width="1.200" height="1.200" fill="#ff1010"/><rect x="11.9" y="8.9" width="1.200" height="1.200" fill="#ff1010"/><rect x="9.9" y="10.9" width="1.200" height="1.200" fill="#ff1010"/><rect x="11.9" y="10.9" width="1.200" height="1.200" fill="#ff1010"/><rect x="7.9" y="12.9" width="1.200" height="1.200" fill="#ff1010"/><rect x="9.9" y="12.9" width="1.200" height="1.200" fill="#ff1010"/><rect x="9.9" y="8.9" width="1.200" height="1.200" fill="#1010ff"/><rect x="11.9" y="12.9" width="1.200" height="1.200" fill="#1010ff"/><rect x="7.9" y="10.9" width="1.200" height="1.200" fill="#00c000"/>
</svg>
<svg class="abs" style="left:370px;top:140px" width="19" height="17" viewBox="0 0 19 17" >
<path d="M2.600 5.800 h1.800 L11.200 1.200 V15.800 L4.400 11 h-1.800 q-1.300 0 -1.300 -1.300 v-2.600 q0 -1.300 1.300 -1.300 z" fill="#f0ec00" stroke="#000" stroke-width="1.300" stroke-linejoin="round"/>
<path d="M8.300 3.600 V13.400" stroke="#6a6800" stroke-width="0.800" stroke-dasharray="1.300 1"/>
<ellipse cx="2.900" cy="8.400" rx="0.900" ry="1.700" fill="#fffcb8"/>
<rect x="7.800" y="7.400" width="1.500" height="2" fill="#e8e8e8" stroke="#333" stroke-width="0.500"/>
<path d="M13.400 4.800 Q15.600 8.400 13.400 12.200" fill="none" stroke="#000" stroke-width="1.300" stroke-dasharray="2.600 0.900"/>
<path d="M15.400 3.600 Q18.600 8.400 15.400 13.400" fill="none" stroke="#000" stroke-width="1.300" stroke-dasharray="2.600 0.900"/>
</svg>
</body>
</html>
